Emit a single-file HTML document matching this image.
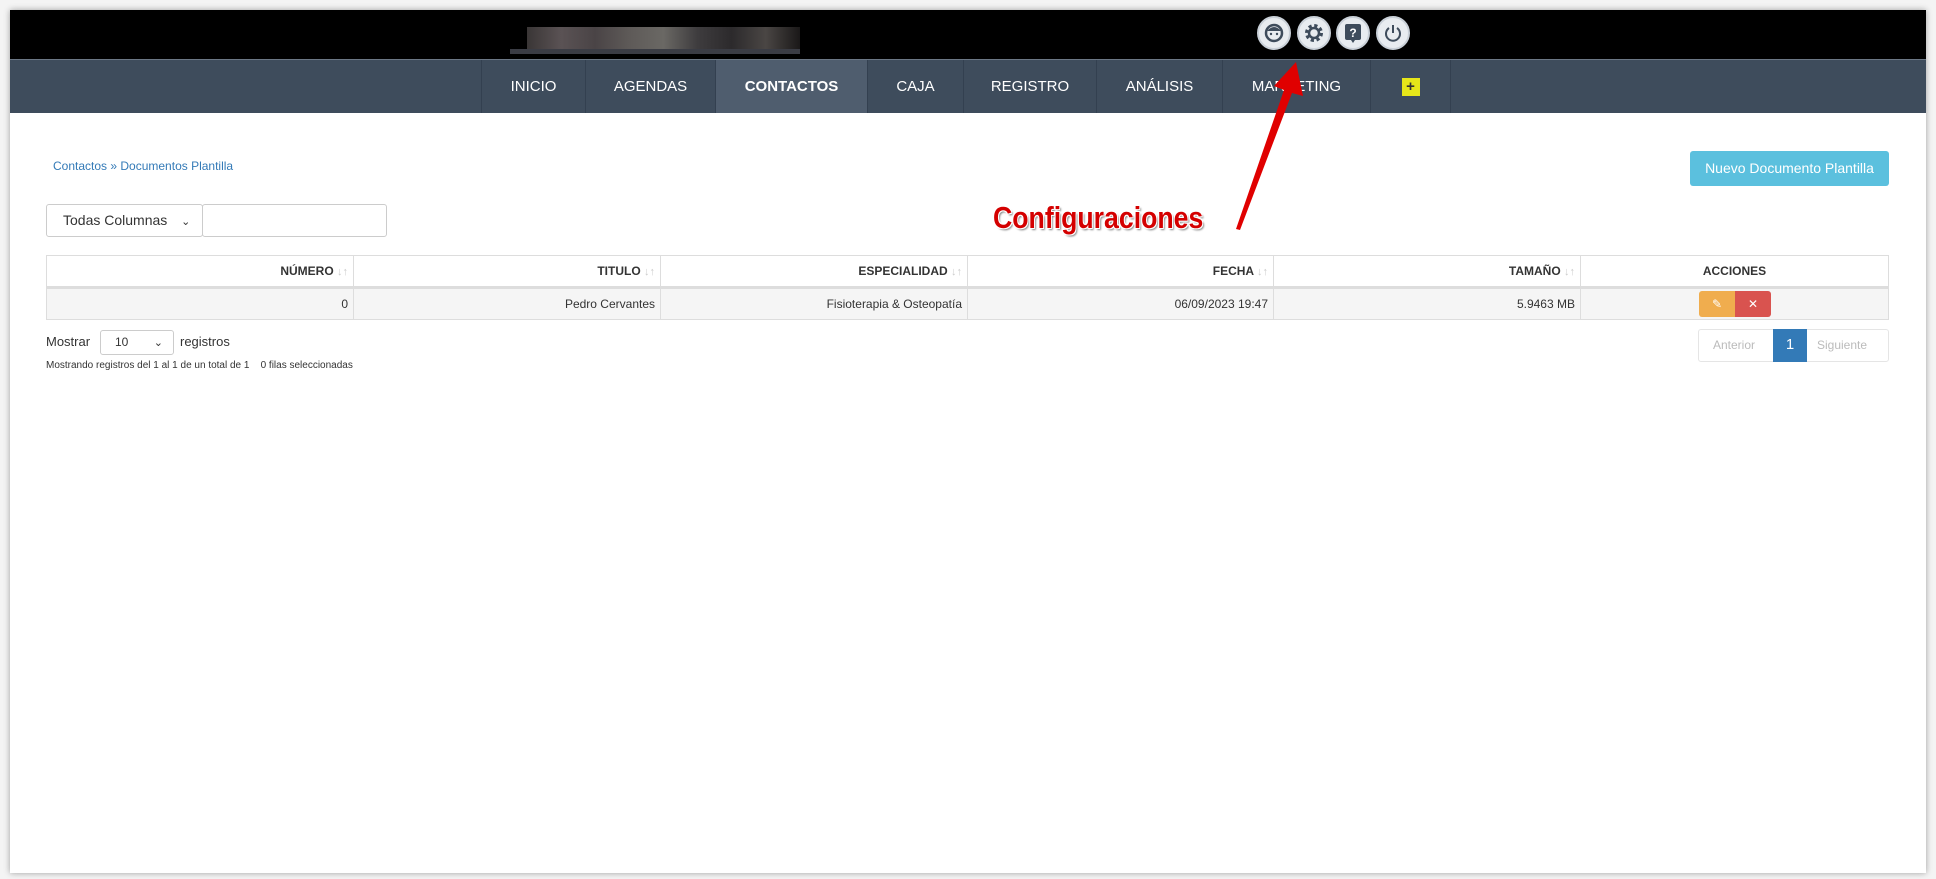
<!DOCTYPE html>
<html><head><meta charset="utf-8"><style>
*{box-sizing:border-box;margin:0;padding:0}
body{width:1936px;height:879px;background:#f4f4f4;font-family:"Liberation Sans",sans-serif;color:#333;position:relative;overflow:hidden}
.card{position:absolute;left:10px;top:10px;width:1916px;height:863px;background:#fff;box-shadow:0 0 6px rgba(0,0,0,.35)}
.top{position:absolute;left:10px;top:10px;width:1916px;height:49px;background:#000}
.nav{position:absolute;left:10px;top:59px;width:1916px;height:54px;background:#3e4c5c;border-top:1px solid #6b7785}
.ni{position:absolute;top:0;height:53px;line-height:53px;color:#fff;font-size:15px;text-align:center;border-left:1px solid #334050}
.abs{position:absolute}
.ic{position:absolute;top:16px;width:34px;height:34px;border-radius:50%;background:#e8ecf0;border:2px solid #c9d0d8}
th,td{font-size:12px;text-align:right;padding:0 5px;border:1px solid #ddd}
table{position:absolute;left:46px;top:255px;width:1843px;border-collapse:collapse}
th{height:32px;font-weight:bold;border-bottom:3px solid #ddd}
td{height:32px;background:#f5f5f5}
.s{color:#ccc;font-weight:normal;font-size:11px}
</style></head><body>
<div class="card"></div>
<div class="top"></div>
<div class="abs" style="left:527px;top:27px;width:273px;height:22px;background:linear-gradient(90deg,#3a3636,#5a5254,#4a4446,#5e5a58,#6a6864,#3e3c3e,#2c2a2c,#4a4644,#1a1818)"></div>
<div class="abs" style="left:510px;top:49px;width:290px;height:5px;background:#3a3c44"></div>
<div class="ic" style="left:1257px"><svg width="30" height="30" viewBox="0 0 30 30"><circle cx="15" cy="15" r="8" fill="none" stroke="#3e4c5c" stroke-width="2.5"/><path d="M8 13 Q15 5 22 13" fill="#3e4c5c"/><circle cx="12" cy="16" r="1.2" fill="#3e4c5c"/><circle cx="18" cy="16" r="1.2" fill="#3e4c5c"/></svg></div>
<div class="ic" style="left:1297px"><svg width="30" height="30" viewBox="0 0 30 30"><circle cx="15" cy="15" r="7" fill="none" stroke="#3e4c5c" stroke-width="4" stroke-dasharray="3 2.5"/><circle cx="15" cy="15" r="5" fill="none" stroke="#3e4c5c" stroke-width="2.5"/></svg></div>
<div class="ic" style="left:1336px"><svg width="30" height="30" viewBox="0 0 30 30"><rect x="7" y="6" width="16" height="16" rx="2" fill="#3e4c5c"/><path d="M13 22 L15 25 L17 22Z" fill="#3e4c5c"/><text x="15" y="19" font-size="12" font-weight="bold" fill="#fff" text-anchor="middle" font-family="Liberation Sans">?</text></svg></div>
<div class="ic" style="left:1376px"><svg width="30" height="30" viewBox="0 0 30 30"><path d="M11 10 A7 7 0 1 0 19 10" fill="none" stroke="#3e4c5c" stroke-width="2"/><path d="M15 7 V15" stroke="#3e4c5c" stroke-width="2"/></svg></div>
<div class="nav">
<div class="ni" style="left:471px;width:104px">INICIO</div>
<div class="ni" style="left:575px;width:130px">AGENDAS</div>
<div class="ni" style="left:705px;width:152px;background:#4f5d6e;font-weight:bold">CONTACTOS</div>
<div class="ni" style="left:857px;width:96px">CAJA</div>
<div class="ni" style="left:953px;width:133px">REGISTRO</div>
<div class="ni" style="left:1086px;width:126px">ANÁLISIS</div>
<div class="ni" style="left:1212px;width:148px">MARKETING</div>
<div class="ni" style="left:1360px;width:81px;border-right:1px solid #334050"><span style="display:inline-block;width:18px;height:18px;background:#e6e619;color:#333;line-height:18px;font-weight:bold;vertical-align:middle">+</span></div>
</div>
<div class="abs" style="left:53px;top:159px;font-size:12px;color:#337ab7">Contactos » Documentos Plantilla</div>
<div class="abs" style="left:1690px;top:151px;width:199px;height:35px;background:#5bc0de;border-radius:3px;color:#fff;font-size:14px;line-height:35px;text-align:center">Nuevo Documento Plantilla</div>
<div class="abs" style="left:46px;top:204px;width:157px;height:33px;border:1px solid #ccc;border-radius:3px;font-size:14px;line-height:31px;padding-left:16px">Todas Columnas <span style="font-size:11px;margin-left:10px">&#8964;</span></div>
<div class="abs" style="left:202px;top:204px;width:185px;height:33px;border:1px solid #ccc;border-radius:3px"></div>
<div class="abs" style="left:993px;top:200px;font-family:'Liberation Sans',sans-serif;font-weight:bold;font-size:31px;color:#d40000;transform:scaleX(.86);transform-origin:left;text-shadow:1px 1px 0 #fff,-1px -1px 0 #fff,1px -1px 0 #fff,-1px 1px 0 #fff,2px 2px 2px #888">Configuraciones</div>
<svg class="abs" style="left:0;top:0" width="1936" height="879"><path d="M1296 62 L1303 96 L1292 93 L1240 230 L1236 229 L1284 90 L1274 86 Z" fill="#e00000"/></svg>
<table>
<tr><th style="width:307px">NÚMERO <span class="s">↓↑</span></th><th style="width:307px">TITULO <span class="s">↓↑</span></th><th style="width:307px">ESPECIALIDAD <span class="s">↓↑</span></th><th style="width:306px">FECHA <span class="s">↓↑</span></th><th style="width:307px">TAMAÑO <span class="s">↓↑</span></th><th style="text-align:center">ACCIONES</th></tr>
<tr><td>0</td><td>Pedro Cervantes</td><td>Fisioterapia &amp; Osteopatía</td><td>06/09/2023 19:47</td><td>5.9463 MB</td><td style="text-align:left;padding-left:118px"><span style="display:inline-block;width:36px;height:26px;background:#f0ad4e;border-radius:3px 0 0 3px;color:#fff;text-align:center;line-height:26px;vertical-align:middle">✎</span><span style="display:inline-block;width:36px;height:26px;background:#d9534f;border-radius:0 3px 3px 0;color:#fff;text-align:center;line-height:26px;vertical-align:middle">✕</span></td></tr>
</table>
<div class="abs" style="left:46px;top:334px;font-size:13px">Mostrar</div>
<div class="abs" style="left:100px;top:330px;width:74px;height:25px;border:1px solid #ccc;border-radius:3px;font-size:12px;line-height:23px;padding-left:14px">10 <span style="margin-left:22px;font-size:11px">&#8964;</span></div>
<div class="abs" style="left:180px;top:334px;font-size:13px">registros</div>
<div class="abs" style="left:46px;top:360px;font-size:10px">Mostrando registros del 1 al 1 de un total de 1 &nbsp;&nbsp; 0 filas seleccionadas</div>
<div class="abs" style="left:1698px;top:329px;width:191px;height:33px;border:1px solid #e5e5e5;border-radius:3px;font-size:12px;color:#bbb;line-height:31px">
<span class="abs" style="left:14px">Anterior</span>
<span class="abs" style="left:74px;top:-1px;width:34px;height:33px;background:#337ab7;color:#fff;text-align:center;font-size:15px">1</span>
<span class="abs" style="left:118px">Siguiente</span></div>
</body></html>
